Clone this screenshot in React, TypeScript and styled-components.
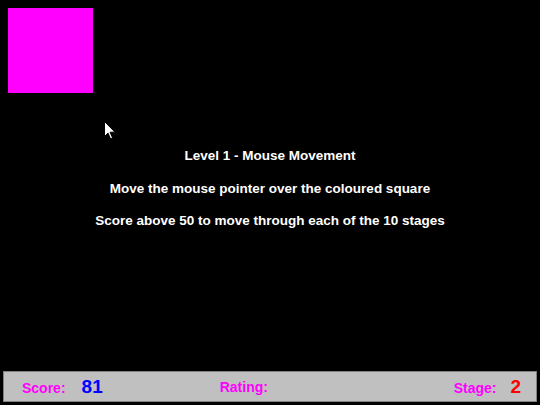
import React from 'react';
import styled, { createGlobalStyle } from 'styled-components';

const GlobalStyle = createGlobalStyle`
  html, body {
    margin: 0;
    padding: 0;
    background: #000;
  }
  body {
    font-family: "Liberation Sans", Arial, sans-serif;
  }
`;

const Screen = styled.div`
  width: 540px;
  height: 405px;
  background: #000;
  display: flex;
  flex-direction: column;
  overflow: hidden;
`;

const Playfield = styled.div`
  position: relative;
  flex: 1;
  display: flex;
  flex-direction: column;
  align-items: center;
  padding-top: 147px;
  box-sizing: border-box;
`;

const Target = styled.div<{ $x: number; $y: number; $size: number; $color: string }>`
  position: absolute;
  left: ${(p) => p.$x}px;
  top: ${(p) => p.$y}px;
  width: ${(p) => p.$size}px;
  height: ${(p) => p.$size}px;
  background: ${(p) => p.$color};
`;

const Pointer = styled.svg`
  position: absolute;
  left: 104px;
  top: 121px;
`;

const Instructions = styled.div`
  display: flex;
  flex-direction: column;
  align-items: center;
  gap: 14.5px;
  color: #fff;
  font-weight: bold;
  font-size: 13.5px;
  line-height: 18px;
`;

const StatusBar = styled.div`
  margin: 0 3px 3px;
  height: 31px;
  box-sizing: border-box;
  background: #c0c0c0;
  border: 1px solid #808080;
  display: flex;
  align-items: center;
  padding: 0 15px 0 18px;
  font-weight: bold;
`;

const Field = styled.div<{ $gap: number }>`
  display: flex;
  align-items: baseline;
  gap: ${(p) => p.$gap}px;
`;

const Spacer = styled.div`
  flex: 1;
`;

const RatingField = styled(Field)`
  margin-left: 117px;
`;

const Label = styled.span`
  color: #ff00ff;
  font-size: 14px;
`;

const Value = styled.span<{ $color: string }>`
  color: ${(p) => p.$color};
  font-size: 19px;
`;

export default function App() {
  return (
    <Screen>
      <GlobalStyle />
      <Playfield>
        <Target $x={8} $y={8} $size={85} $color="#ff00ff" />
        <Pointer width="12" height="19" viewBox="0 0 12 19">
          <path
            d="M0.5 0.5 L0.5 15.5 L4 12 L6.5 17.8 L8.6 16.9 L6.1 11.2 L11 11.2 Z"
            fill="#fff"
            stroke="#000"
            strokeWidth="1"
          />
        </Pointer>
        <Instructions>
          <div>Level 1 - Mouse Movement</div>
          <div>Move the mouse pointer over the coloured square</div>
          <div>Score above 50 to move through each of the 10 stages</div>
        </Instructions>
      </Playfield>
      <StatusBar>
        <Field $gap={16}>
          <Label>Score:</Label>
          <Value $color="#0000ff">81</Value>
        </Field>
        <RatingField $gap={0}>
          <Label>Rating:</Label>
        </RatingField>
        <Spacer />
        <Field $gap={14}>
          <Label>Stage:</Label>
          <Value $color="#ff0000">2</Value>
        </Field>
      </StatusBar>
    </Screen>
  );
}
